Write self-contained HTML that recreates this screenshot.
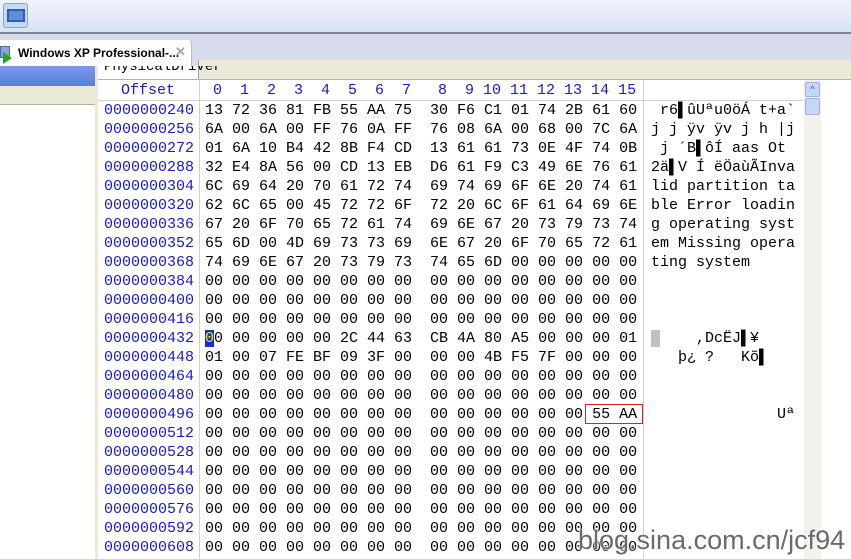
<!DOCTYPE html>
<html><head><meta charset="utf-8"><style>
*{margin:0;padding:0;box-sizing:border-box}
body{width:851px;height:559px;overflow:hidden;background:#fff;position:relative;font-family:"Liberation Mono",monospace}
.a{position:absolute}
.m{font-family:"Liberation Mono",monospace;font-size:15px;line-height:19px;white-space:pre;color:#000}
.off{color:#1a1acc}
</style></head><body>
<div class="a" style="left:0;top:0;width:851px;height:33px;background:linear-gradient(#f0f4fb,#d6e2f3)"></div>
<div class="a" style="left:0;top:32px;width:851px;height:2px;background:#7b8591"></div>
<div class="a" style="left:3px;top:3px;width:25px;height:25px;border:1px solid #8fa6c8;border-radius:3px;background:#c9daf0"></div>
<div class="a" style="left:7px;top:9px;width:18px;height:13px;border:2px solid #2a5cb8;background:#5d8fd8"></div>
<div class="a" style="left:0;top:34px;width:851px;height:32px;background:#d8dbec"></div>
<div class="a" style="left:0;top:40px;width:192px;height:27px;background:#fff;border-right:1px solid #b8bccc;border-radius:0 4px 0 0"></div>
<div class="a" style="left:0;top:46px;width:10px;height:12px;background:#8aa6d8;border:1px solid #4a6aa8"></div>
<div class="a" style="left:3px;top:52px;width:0;height:0;border-left:9px solid #22aa22;border-top:6px solid transparent;border-bottom:6px solid transparent"></div>
<div class="a" style="left:18px;top:46px;font:bold 12px 'Liberation Sans',sans-serif;color:#000">Windows XP Professional-...</div>
<div class="a" style="left:175px;top:44px;font:bold 13px 'Liberation Sans',sans-serif;color:#9aa">✕</div>
<div class="a" style="left:0;top:66px;width:96px;height:20px;background:linear-gradient(#7a9be6,#5a7fdc)"></div>
<div class="a" style="left:0;top:86px;width:96px;height:19px;background:#ece9d8;border-bottom:1px solid #b0b0a8"></div>
<div class="a" style="left:95px;top:66px;width:3px;height:493px;background:#ece9d8"></div>
<div class="a" style="left:198px;top:60px;width:653px;height:19px;background:#ece9d8;border-left:1px solid #a0a0a0"></div>
<div class="a" style="left:98px;top:79px;width:753px;height:1px;background:#b0b0b0"></div>
<div class="a" style="left:104px;top:66px;height:9px;overflow:hidden"><div style="font:14px 'Liberation Mono',monospace;color:#000;line-height:14px;margin-top:-6px">PhysicalDriver</div></div>
<div class="a" style="left:199px;top:80px;width:1px;height:479px;background:#d4d0c8"></div>
<div class="a" style="left:643px;top:80px;width:1px;height:479px;background:#d4d0c8"></div>
<div class="a" style="left:98px;top:100px;width:705px;height:1px;background:#d4d0c8"></div>
<div class="a" style="left:804px;top:80px;width:17px;height:479px;background:#f3f1ec"></div>
<div class="a" style="left:805px;top:82px;width:15px;height:15px;background:#c5d6f7;border:1px solid #9ab2e4;border-radius:2px;font:9px sans-serif;color:#34f;text-align:center;line-height:13px">^</div>
<div class="a" style="left:805px;top:98px;width:15px;height:17px;background:#c5d6f7;border:1px solid #9ab2e4;border-radius:2px"></div>
<div class="a m off" style="left:121px;top:81px">Offset</div>
<div class="a m off" style="left:213px;top:81px">0  1  2  3  4  5  6  7   8  9 10 11 12 13 14 15</div>
<div class="a m" style="left:104px;top:101px"><span class="off">0000000240
0000000256
0000000272
0000000288
0000000304
0000000320
0000000336
0000000352
0000000368
0000000384
0000000400
0000000416
0000000432
0000000448
0000000464
0000000480
0000000496
0000000512
0000000528
0000000544
0000000560
0000000576
0000000592
0000000608</span></div>
<div class="a m" style="left:205px;top:101px">13 72 36 81 FB 55 AA 75  30 F6 C1 01 74 2B 61 60
6A 00 6A 00 FF 76 0A FF  76 08 6A 00 68 00 7C 6A
01 6A 10 B4 42 8B F4 CD  13 61 61 73 0E 4F 74 0B
32 E4 8A 56 00 CD 13 EB  D6 61 F9 C3 49 6E 76 61
6C 69 64 20 70 61 72 74  69 74 69 6F 6E 20 74 61
62 6C 65 00 45 72 72 6F  72 20 6C 6F 61 64 69 6E
67 20 6F 70 65 72 61 74  69 6E 67 20 73 79 73 74
65 6D 00 4D 69 73 73 69  6E 67 20 6F 70 65 72 61
74 69 6E 67 20 73 79 73  74 65 6D 00 00 00 00 00
00 00 00 00 00 00 00 00  00 00 00 00 00 00 00 00
00 00 00 00 00 00 00 00  00 00 00 00 00 00 00 00
00 00 00 00 00 00 00 00  00 00 00 00 00 00 00 00
<span style="background:#1030d0;color:#ee0">0</span>0 00 00 00 00 2C 44 63  CB 4A 80 A5 00 00 00 01
01 00 07 FE BF 09 3F 00  00 00 4B F5 7F 00 00 00
00 00 00 00 00 00 00 00  00 00 00 00 00 00 00 00
00 00 00 00 00 00 00 00  00 00 00 00 00 00 00 00
00 00 00 00 00 00 00 00  00 00 00 00 00 00 55 AA
00 00 00 00 00 00 00 00  00 00 00 00 00 00 00 00
00 00 00 00 00 00 00 00  00 00 00 00 00 00 00 00
00 00 00 00 00 00 00 00  00 00 00 00 00 00 00 00
00 00 00 00 00 00 00 00  00 00 00 00 00 00 00 00
00 00 00 00 00 00 00 00  00 00 00 00 00 00 00 00
00 00 00 00 00 00 00 00  00 00 00 00 00 00 00 00
00 00 00 00 00 00 00 00  00 00 00 00 00 00 00 00</div>
<div class="a" style="left:585px;top:404px;width:58px;height:20px;border:1px solid #e02020"></div>
<div class="a m" style="left:651px;top:101px"> r6▌ûUªu0öÁ t+a`
j j ÿv ÿv j h |j
 j ´B▌ôÍ aas Ot
2ä▌V Í ëÖaùÃInva
lid partition ta
ble Error loadin
g operating syst
em Missing opera
ting system



<span style="background:#c0c0c0"> </span>    ,DcËJ▌¥
   þ¿ ?   Kõ▌


              Uª</div>
<div class="a" style="left:578px;top:525px;font:27px 'Liberation Sans',sans-serif;color:#6a6a6a;text-shadow:0 0 2px #fff,0 0 2px #fff;white-space:nowrap">blog.sina.com.cn/jcf94</div>
</body></html>
